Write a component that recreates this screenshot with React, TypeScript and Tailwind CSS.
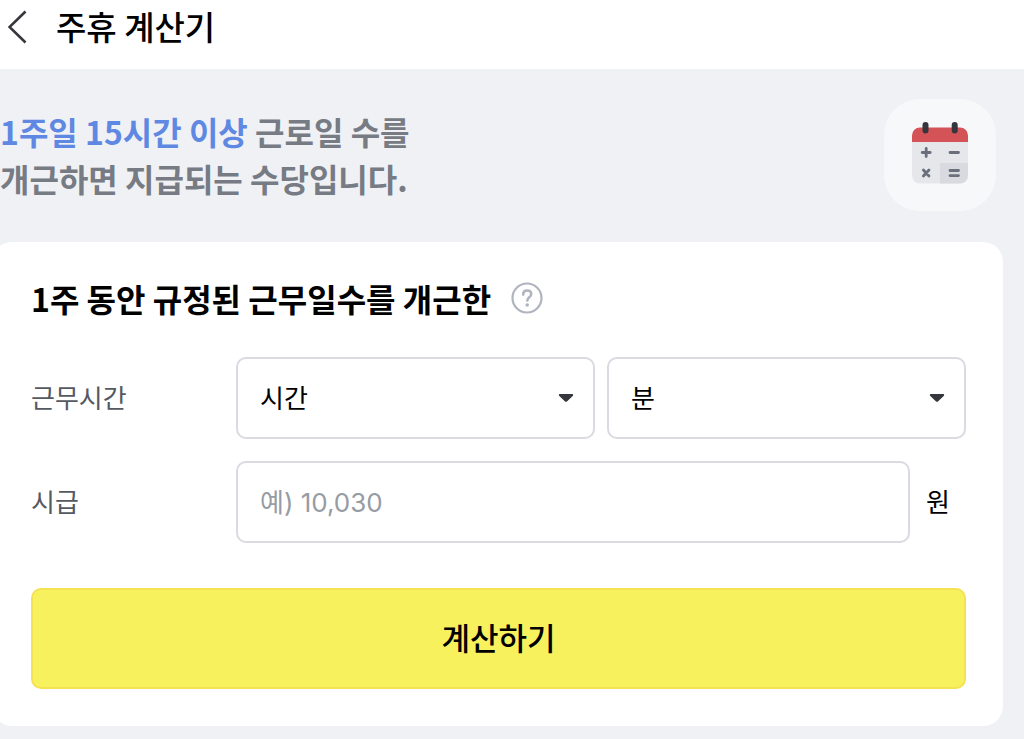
import type { ReactNode } from "react";

const FIELD =
  "h-[82px] w-full rounded-[10px] border-2 border-[#d9dbe1] bg-white px-[22px] text-[26px] text-black outline-none focus:border-[#9aa0ad]";

function Field({ id, label, children }: { id: string; label: string; children: ReactNode }) {
  return (
    <div className="flex items-center">
      <label htmlFor={id} className="w-[205px] shrink-0 pb-[3px] text-[26px] text-[#555962]">
        {label}
      </label>
      {children}
    </div>
  );
}

function Dropdown({ id, name, count }: { id: string; name: string; count: number }) {
  return (
    <div className="relative min-w-0 flex-1">
      <select id={id} aria-label={name} defaultValue="" className={`${FIELD} appearance-none pb-[3px]`}>
        <option value="">{name}</option>
        {Array.from({ length: count }, (_, i) => (
          <option key={i} value={i}>
            {i}
          </option>
        ))}
      </select>
      <svg
        className="pointer-events-none absolute top-9 right-[21px] h-[9px] w-4"
        viewBox="0 0 16 9"
        aria-hidden="true"
      >
        <path
          d="M2 1h12c1.200 0 1.600 1.200.7 2L9.200 8.200a1.800 1.800 0 0 1-2.400 0L1.300 3C.4 2.200.8 1 2 1Z"
          fill="#36373c"
        />
      </svg>
    </div>
  );
}

function CalendarIcon() {
  return (
    <svg className="h-[66px] w-14" viewBox="0 0 56 66" fill="none" aria-hidden="true">
      <path d="M0 19h56v34.500a8 8 0 0 1-8 8H8a8 8 0 0 1-8-8Z" fill="#e6e7ea" />
      <path d="M28 41h28v12.500a8 8 0 0 1-8 8H28Z" fill="#d9dadf" />
      <path d="M8 5.500h40a8 8 0 0 1 8 8V20H0v-6.500a8 8 0 0 1 8-8Z" fill="#d35357" />
      <path d="M13.500 3v5.500M42.700 3v5.500" stroke="#35363d" strokeWidth="6" strokeLinecap="round" />
      <g stroke="#69707b" strokeWidth="2.800" strokeLinecap="round">
        <path d="M10.200 30.500h8M14.200 26.500v8M38 30.500h8.500" />
        <path d="m11.400 48 5.600 6M17 48l-5.600 6M38 48.500h8.500M38 53.600h8.500" />
      </g>
    </svg>
  );
}

export default function App() {
  return (
    <div className="flex min-h-screen flex-col bg-[#f0f1f5] font-['Noto_Sans_CJK_KR',sans-serif] text-black">
      <header className="flex h-[69px] items-center bg-white pb-4 pl-2">
        <button type="button" aria-label="뒤로" className="mr-7">
          <svg className="h-9 w-5" viewBox="0 0 20 36" fill="none" aria-hidden="true">
            <path d="M17.500 2.500 1.500 18l16 15.500" stroke="#36373c" strokeWidth="2.600" />
          </svg>
        </button>
        <h1 className="text-[33px] font-medium">주휴 계산기</h1>
      </header>

      <main className="flex-1">
        <section className="flex h-[173px] items-center justify-between pr-7 pb-0.5">
          <p className="text-[32px] leading-[47px] font-bold text-[#777b83]">
            <span className="text-[#5f88e2]">1주일 15시간 이상</span> 근로일 수를
            <br />
            개근하면 지급되는 수당입니다.
          </p>
          <div className="flex h-28 w-28 items-center justify-center rounded-[36px] bg-[#f7f8fa]">
            <CalendarIcon />
          </div>
        </section>

        <form
          className="mr-[21px] -ml-2 rounded-[20px] bg-white pt-8 pr-[37px] pb-[37px] pl-[39px]"
          onSubmit={(e) => e.preventDefault()}
        >
          <div className="flex h-12 items-center gap-5">
            <h2 className="text-[32px] font-bold">1주 동안 규정된 근무일수를 개근한</h2>
            <button type="button" aria-label="도움말">
              <svg className="h-8 w-8" viewBox="0 0 32 32" fill="none" aria-hidden="true">
                <circle cx="16" cy="16" r="14.500" stroke="#b0b4bf" strokeWidth="2.200" />
                <path
                  d="M12.200 12.600c0-2.500 1.600-4.100 4-4.100s4 1.500 4 3.700c0 2.900-3.900 3.200-3.900 6.300"
                  stroke="#b0b4bf"
                  strokeWidth="2.600"
                  strokeLinecap="round"
                />
                <circle cx="16.200" cy="23" r="1.800" fill="#b0b4bf" />
              </svg>
            </button>
          </div>

          <div className="mt-[35px] flex flex-col gap-[22px]">
            <Field id="hours" label="근무시간">
              <div className="flex min-w-0 flex-1 gap-3">
                <Dropdown id="hours" name="시간" count={41} />
                <Dropdown id="minutes" name="분" count={60} />
              </div>
            </Field>
            <Field id="wage" label="시급">
              <input
                id="wage"
                type="text"
                inputMode="numeric"
                placeholder="예) 10,030"
                className={`${FIELD} min-w-0 flex-1 font-['Inter','Noto_Sans_CJK_KR',sans-serif] placeholder:text-[#979ba4]`}
              />
              <span className="w-14 shrink-0 pb-[3px] pl-4 text-[26px]">원</span>
            </Field>
          </div>

          <button
            type="submit"
            className="mt-[45px] h-[101px] w-full rounded-[10px] border-2 border-[#f4e252] bg-[#f8f15e] pb-[3px] text-[31px] font-medium"
          >
            계산하기
          </button>
        </form>
      </main>
    </div>
  );
}
